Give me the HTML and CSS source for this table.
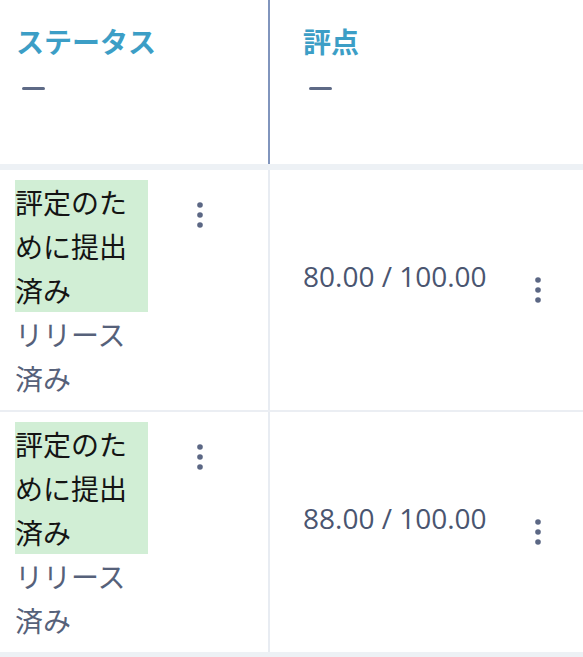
FILE: index.html
```html
<!DOCTYPE html>
<html lang="ja">
<head>
<meta charset="utf-8">
<title>評点</title>
<link rel="stylesheet" href="styles.css">
</head>
<body>
<div class="table">
  <div class="thead">
    <div class="th th-status">
      <div class="th-label">ステータス</div>
      <span class="sort-dash"></span>
    </div>
    <div class="th th-grade">
      <div class="th-label">評点</div>
      <span class="sort-dash"></span>
    </div>
  </div>

  <div class="row">
    <div class="cell cell-status">
      <div class="status">
        <div class="status-badge">評定のために提出済み</div>
        <div class="status-sub">リリース済み</div>
      </div>
      <button class="kebab kebab-status" aria-label="メニュー">
        <svg width="6" height="26" viewBox="0 0 6 26"><circle cx="3" cy="3" r="2.8"/><circle cx="3" cy="13" r="2.8"/><circle cx="3" cy="23" r="2.8"/></svg>
      </button>
    </div>
    <div class="cell cell-grade">
      <span class="score">80.00 / 100.00</span>
      <button class="kebab kebab-grade" aria-label="メニュー">
        <svg width="6" height="26" viewBox="0 0 6 26"><circle cx="3" cy="3" r="2.8"/><circle cx="3" cy="13" r="2.8"/><circle cx="3" cy="23" r="2.8"/></svg>
      </button>
    </div>
  </div>

  <div class="row row-last">
    <div class="cell cell-status">
      <div class="status">
        <div class="status-badge">評定のために提出済み</div>
        <div class="status-sub">リリース済み</div>
      </div>
      <button class="kebab kebab-status" aria-label="メニュー">
        <svg width="6" height="26" viewBox="0 0 6 26"><circle cx="3" cy="3" r="2.8"/><circle cx="3" cy="13" r="2.8"/><circle cx="3" cy="23" r="2.8"/></svg>
      </button>
    </div>
    <div class="cell cell-grade">
      <span class="score">88.00 / 100.00</span>
      <button class="kebab kebab-grade" aria-label="メニュー">
        <svg width="6" height="26" viewBox="0 0 6 26"><circle cx="3" cy="3" r="2.8"/><circle cx="3" cy="13" r="2.8"/><circle cx="3" cy="23" r="2.8"/></svg>
      </button>
    </div>
  </div>
</div>
</body>
</html>
```

FILE: styles.css
```css
* {
  box-sizing: border-box;
}

html, body {
  margin: 0;
  padding: 0;
  background: #ffffff;
}

body {
  font-family: "Open Sans", "Noto Sans CJK JP", sans-serif;
  font-size: 28px;
  color: #4b5670;
}

.table {
  width: 583px;
}

.thead {
  display: grid;
  grid-template-columns: 270px 1fr;
  height: 170px;
  border-bottom: 6px solid #edf1f5;
}

.th {
  padding-top: 21px;
}

.th-status {
  padding-left: 16px;
  border-right: 2px solid #8195bd;
}

.th-grade {
  padding-left: 33px;
}

.th-label {
  font-family: "Noto Sans CJK JP", sans-serif;
  font-weight: 700;
  font-size: 28px;
  line-height: 40px;
  color: #3c9ec6;
}

.sort-dash {
  display: block;
  width: 23px;
  height: 3px;
  margin: 26px 0 0 6px;
  border-radius: 2px;
  background: #5e6a86;
}

.row {
  display: grid;
  grid-template-columns: 270px 1fr;
  height: 242px;
  border-bottom: 2px solid #ebeef3;
}

.row-last {
  height: 245px;
  border-bottom: 5px solid #edf1f5;
}

.cell {
  padding: 10px 0 10px 15px;
}

.cell-status {
  display: flex;
  align-items: flex-start;
  border-right: 2px solid #e8ecf2;
}

.status {
  width: 133px;
  font-family: "Noto Sans CJK JP", sans-serif;
  font-size: 28px;
  line-height: 44px;
}

.status-badge {
  background: #d1eed5;
  color: #141414;
}

.status-sub {
  color: #56617a;
}

.kebab {
  border: 0;
  padding: 0;
  margin: 0;
  background: none;
  line-height: 0;
  fill: #5b6784;
}

.kebab-status {
  margin: 22px 0 0 49px;
}

.cell-grade {
  display: flex;
  align-items: center;
  padding: 0 42px 0 33px;
}

.score {
  line-height: 44px;
  margin-bottom: 28px;
  color: #4a5570;
}

.kebab-grade {
  margin-left: auto;
}
```
